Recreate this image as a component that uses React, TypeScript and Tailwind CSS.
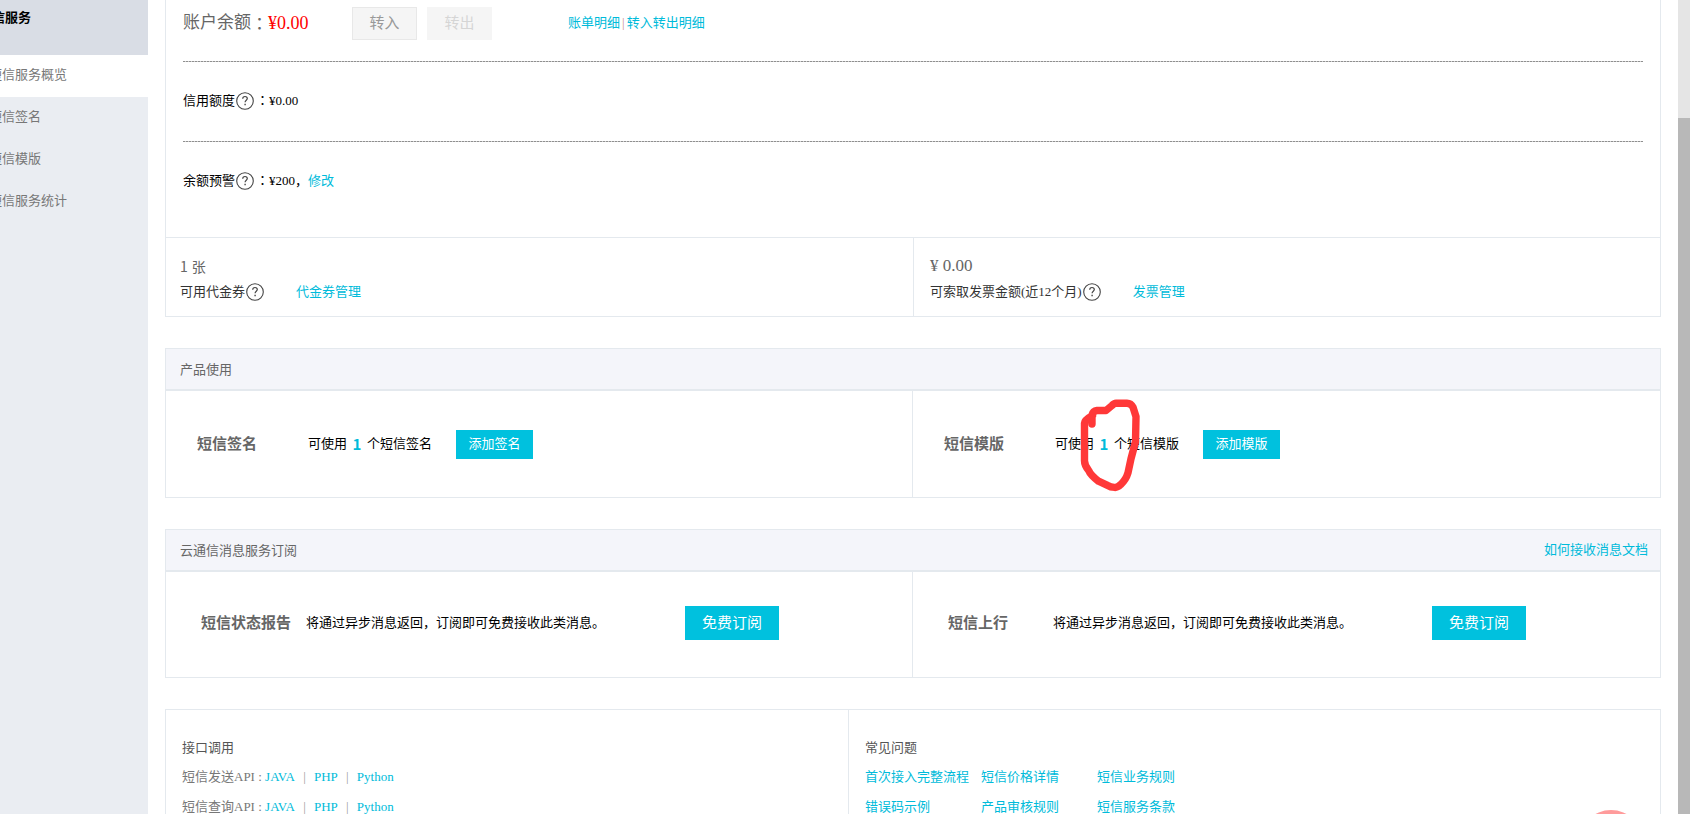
import React from "react";

const FAQ = [
  ["首次接入完整流程", "短信价格详情", "短信业务规则"],
  ["错误码示例", "产品审核规则", "短信服务条款"],
];

function Link({ children }: { children: React.ReactNode }) {
  return (
    <a href="#" className="whitespace-nowrap text-[#00bbda]">
      {children}
    </a>
  );
}

function Colon() {
  return <span className="font-[Noto_Sans_CJK_TC]">：</span>;
}

function HelpIcon() {
  return (
    <svg viewBox="0 0 18 18" className="h-[18px] w-[18px] shrink-0" fill="none" stroke="#444" role="img" aria-label="帮助">
      <circle cx="9" cy="9" r="8.3" strokeWidth="1.1" />
      <path d="M6.7 6.8c0-1.500 1-2.300 2.300-2.300s2.300.8 2.300 2.100c0 1.700-2.200 1.700-2.200 3.700" strokeWidth="1.2" />
      <path d="M9.100 11.700v1.500" strokeWidth="1.400" />
    </svg>
  );
}

function DottedLine() {
  return <div className="h-px bg-[repeating-linear-gradient(90deg,#8f8f8f_0_2px,#d0d0d0_2px_3px)]" />;
}

function Section({ title, extra, children }: { title: string; extra?: React.ReactNode; children: React.ReactNode }) {
  return (
    <section className="mt-[31px] border border-[#e4e9ee]">
      <header className="flex h-[42px] items-center justify-between border-b-2 border-[#e4e9ee] bg-[#f4f5fa] pr-3 pl-3.5">
        <h2 className="pt-0.5 text-[#666]">{title}</h2>
        {extra}
      </header>
      <div className="grid grid-cols-2">{children}</div>
    </section>
  );
}

function Usage({ name, action, marked }: { name: string; action: string; marked?: boolean }) {
  return (
    <div className={marked ? "relative flex h-[106px] items-center pl-[31px]" : "flex h-[106px] items-center border-r border-[#e4e9ee] pl-[31px]"}>
      <h3 className="w-[111px] text-[15px] font-bold text-[#666]">{name}</h3>
      <p className="flex w-[148px] items-center whitespace-nowrap text-black">
        可使用
        <b className="w-5 text-center font-[Noto_Sans_CJK_SC] text-[15px] text-[#00bbda]">1</b>
        个{name}
      </p>
      <button type="button" className="h-[29px] w-[77px] bg-[#00c1de] text-white">
        {action}
      </button>
      {marked && (
        <svg viewBox="0 0 70 100" className="pointer-events-none absolute top-px left-[161px] h-[100px] w-[70px]" fill="none" stroke="#ff3838" strokeWidth="7.4" strokeLinecap="round" strokeLinejoin="round" aria-hidden="true">
          <path d="M18 32V23q1-4 5-4.500h9l6-5q2-2.300 4-2.300h11q4 0 6 4l3 9.500-.5 25-4.500 17-3 14q-2 7-7.500 12-3 3-6 2.700-4 0-7-2l-9-4.200q-8-6-10-11-4-5-4-9.500V31q0-3 8-7.500" />
        </svg>
      )}
    </div>
  );
}

function Subscription({ name, divided }: { name: string; divided?: boolean }) {
  return (
    <div className={divided ? "flex h-[105px] items-center border-r border-[#e4e9ee] pb-[3px] pl-[35px]" : "flex h-[105px] items-center pb-[3px] pl-[35px]"}>
      <h3 className="w-[105px] text-[15px] font-bold whitespace-nowrap text-[#666]">{name}</h3>
      <p className="w-[379px] whitespace-nowrap text-black">将通过异步消息返回，订阅即可免费接收此类消息。</p>
      <button type="button" className="h-[34px] w-[94px] bg-[#00c1de] text-[15px] text-white">
        免费订阅
      </button>
    </div>
  );
}

function ApiRow({ label }: { label: string }) {
  return (
    <p className="flex h-[30px] items-center whitespace-nowrap text-[#777]">
      {label} :&nbsp;<Link>JAVA</Link>
      <span className="w-[19px] text-center text-[#999]">|</span>
      <Link>PHP</Link>
      <span className="w-[19px] text-center text-[#999]">|</span>
      <Link>Python</Link>
    </p>
  );
}

function Sidebar() {
  const items = ["短信服务概览", "短信签名", "短信模版", "短信服务统计"];
  return (
    <aside className="w-[148px] shrink-0 overflow-hidden bg-[#eaedf2]">
      <div className="flex h-[55px] items-start bg-[#d9dde5] pt-2">
        <h1 className="-ml-2 font-bold text-black">信服务</h1>
      </div>
      <nav>
        {items.map((item, i) => (
          <a key={item} href="#" className={i === 0 ? "flex h-[42px] items-center bg-white pb-0.5 text-[#777]" : "flex h-[42px] items-center pb-0.5 text-[#777]"}>
            <span className="-ml-[11px]">{item}</span>
          </a>
        ))}
      </nav>
    </aside>
  );
}

export default function App() {
  return (
    <div lang="zh-CN" className="relative flex h-screen overflow-hidden bg-white font-['Liberation_Serif','Noto_Sans_CJK_SC',sans-serif] text-[13px] leading-5">
      <Sidebar />
      <main className="min-w-0 flex-1 px-[17px]">
        <section className="border border-t-0 border-[#e4e9ee]">
          <div className="px-[17px]">
            <div className="flex h-[61px] items-start pt-[7px]">
              <div className="flex h-[33px] w-[169px] items-center pb-0.5 text-[17px] text-[#666]">
                账户余额<Colon /><span className="text-[18px] text-[#f00]">¥0.00</span>
              </div>
              <button type="button" className="h-[33px] w-[65px] border border-[#e8e8e8] bg-[#f5f5f5] pb-0.5 text-[15px] text-[#999]">转入</button>
              <button type="button" disabled className="ml-2.5 h-[33px] w-[65px] bg-[#f5f5f5] pb-0.5 text-[15px] text-[#d5d5d5]">转出</button>
              <div className="ml-[76px] flex h-[33px] items-center gap-0.5 pb-0.5">
                <Link>账单明细</Link>
                <span className="text-[#c88]">|</span>
                <Link>转入转出明细</Link>
              </div>
            </div>
            <DottedLine />
            <div className="flex h-[79px] items-center pb-0.5 text-black">
              <span className="mr-px">信用额度</span>
              <HelpIcon />
              <span className="ml-0.5"><Colon />¥0.00</span>
            </div>
            <DottedLine />
            <div className="flex h-[95px] items-center pb-[18px] text-black">
              <span className="mr-px">余额预警</span>
              <HelpIcon />
              <span className="ml-0.5"><Colon />¥200，</span>
              <Link>修改</Link>
            </div>
          </div>
          <div className="grid grid-cols-2 border-t border-[#e4e9ee] text-[#333]">
            <div className="h-[78px] pt-4 pl-3.5">
              <p className="flex gap-1 font-[Noto_Sans_CJK_SC] text-[14px] leading-6 text-[#666]">
                <span>1</span>
                <span>张</span>
              </p>
              <div className="mt-1 flex items-center">
                <span className="mr-px">可用代金券</span>
                <HelpIcon />
                <span className="ml-8"><Link>代金券管理</Link></span>
              </div>
            </div>
            <div className="h-[78px] border-l border-[#e4e9ee] pt-4 pl-4">
              <p className="text-[17px] leading-6 text-[#666]">¥ 0.00</p>
              <div className="mt-1 flex items-center">
                <span className="mr-px">可索取发票金额(近12个月)</span>
                <HelpIcon />
                <span className="ml-8"><Link>发票管理</Link></span>
              </div>
            </div>
          </div>
        </section>

        <Section title="产品使用">
          <Usage name="短信签名" action="添加签名" />
          <Usage name="短信模版" action="添加模版" marked />
        </Section>

        <Section title="云通信消息服务订阅" extra={<Link>如何接收消息文档</Link>}>
          <Subscription name="短信状态报告" divided />
          <Subscription name="短信上行" />
        </Section>

        <section className="mt-[31px] grid grid-cols-[683fr_811fr] border border-[#e4e9ee]">
          <div className="h-[180px] border-r border-[#e4e9ee] pt-7 pl-4">
            <h2 className="mb-1 text-[#555]">接口调用</h2>
            <ApiRow label="短信发送API" />
            <ApiRow label="短信查询API" />
          </div>
          <div className="h-[180px] pt-7 pl-4">
            <h2 className="mb-1 text-[#555]">常见问题</h2>
            {FAQ.map((row) => (
              <div key={row[0]} className="grid h-[30px] grid-cols-[116px_116px_116px] items-center">
                {row.map((t) => (
                  <Link key={t}>{t}</Link>
                ))}
              </div>
            ))}
          </div>
        </section>
      </main>
      <div className="w-3 shrink-0 bg-[#e5e5e5] pt-[118px]" aria-hidden="true">
        <div className="h-full bg-[#b8b8b8]" />
      </div>
      <button type="button" aria-label="联系客服" className="absolute right-[47px] -bottom-[60px] h-16 w-16 rounded-full bg-[#ff9b9b]" />
    </div>
  );
}
